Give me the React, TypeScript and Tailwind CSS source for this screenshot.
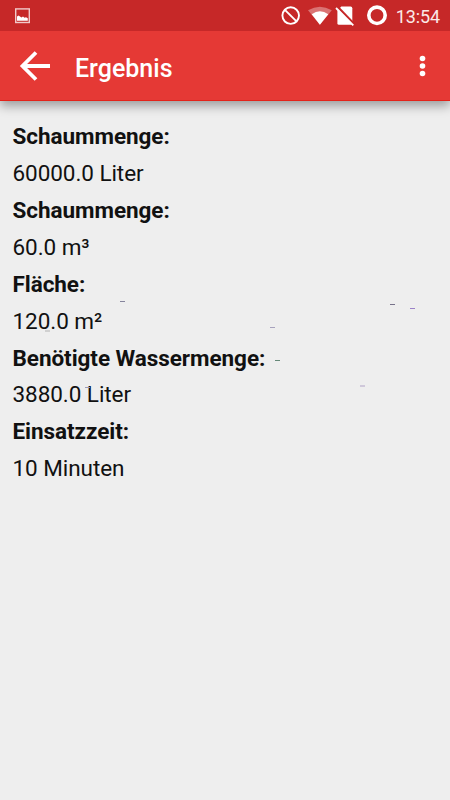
type Result = {
  label: string
  value: string
}

const results: Result[] = [
  { label: "Schaummenge:", value: "60000.0 Liter" },
  { label: "Schaummenge:", value: "60.0 m³" },
  { label: "Fläche:", value: "120.0 m²" },
  { label: "Benötigte Wassermenge:", value: "3880.0 Liter" },
  { label: "Einsatzzeit:", value: "10 Minuten" },
]

const StatusBar = () => (
  <div className="relative z-10 flex h-[31px] items-center justify-between bg-[#c62828] pl-[15px] pr-[10px] text-white">
    <svg width="16" height="16" viewBox="0 0 16 16">
      <rect x="0.7" y="0.9" width="13.6" height="13.6" fill="none" stroke="#fff" strokeOpacity="0.75" strokeWidth="1.4" />
      <path d="M2 12.8V8.6L3.5 7.4 5 8.4l1.5 1 1.5-.9 1.5 1.2 1.5-.5 1.8 1v2.6z" fill="#fff" />
    </svg>
    <div className="flex h-full items-center gap-[5px]">
      <svg width="112" height="31" viewBox="0 0 112 31">
        <g fill="none" stroke="#fff">
          <circle cx="11.7" cy="15.6" r="8.3" strokeWidth="1.9" />
          <path d="M5.9 9.8l11.6 11.6" strokeWidth="1.9" />
          <circle cx="98" cy="15.3" r="8.2" strokeWidth="3.6" />
        </g>
        <path d="M29 10.3Q40.9 3.3 52.8 10.3L40.9 24.8z" fill="#fff" fillOpacity="0.35" />
        <path d="M32.7 14.2Q40.9 8.4 49.3 14.2L40.9 24.8z" fill="#fff" />
        <path d="M62.3 6.6H71.6q1.7 0 1.7 1.7V23.2q0 1.6-1.6 1.6H60q-1.6 0-1.6-1.6V10.7z" fill="#fff" />
        <path d="M58.6 6.9L75.6 24.5" stroke="#c62828" strokeWidth="2.4" />
        <path d="M57 8l17.3 17.3" stroke="#fff" strokeWidth="1.8" />
      </svg>
      <span className="pt-[2px] text-[18px] leading-none tracking-[-0.1px] text-[#fbe9e7]">13:54</span>
    </div>
  </div>
)

const Toolbar = () => (
  <header className="flex h-[70px] items-center justify-between border-b border-[#e32219] bg-[#e53935] pl-[19px] pr-[24px] text-white shadow-[0_5px_10px_0px_rgba(0,0,0,0.34)]">
    <div className="flex items-center gap-[24px]">
      <button aria-label="Zurück">
        <svg width="32" height="32" viewBox="0 0 32 32" fill="none" stroke="#fff" strokeWidth="3.8">
          <path d="M31 16H4M17 2.5L3.5 16 17 29.5" />
        </svg>
      </button>
      <h1 className="pt-[5px] text-[25px] font-medium leading-none">Ergebnis</h1>
    </div>
    <button aria-label="Menü">
      <svg width="7" height="22" viewBox="0 0 7 22" fill="#fff">
        <circle cx="3.5" cy="3.5" r="2.8" />
        <circle cx="3.5" cy="11" r="2.8" />
        <circle cx="3.5" cy="18.5" r="2.8" />
      </svg>
    </button>
  </header>
)

// faint dashes scattered over the result area
const Specks = () => (
  <svg aria-hidden="true" className="pointer-events-none absolute inset-0" width="450" height="800" shapeRendering="crispEdges">
    <rect x="120" y="301" width="5" height="1" fill="#85849c" />
    <rect x="270" y="327" width="5" height="1" fill="#a7a2bd" />
    <rect x="45" y="330" width="5" height="2" fill="#d0d0d0" />
    <rect x="390" y="304" width="5" height="1" fill="#77728a" />
    <rect x="410" y="308" width="5" height="1" fill="#9b82c8" />
    <rect x="275" y="360" width="5" height="1" fill="#668878" />
    <rect x="360" y="385" width="5" height="2" fill="#cfc8da" />
    <rect x="85" y="387" width="5" height="1" fill="#9999b8" />
  </svg>
)

const App = () => {
  return (
    <div className="relative min-h-screen bg-[#eeeeee] font-['Roboto',sans-serif]">
      <StatusBar />
      <Toolbar />
      <main className="px-[12.5px] pt-[17.3px] text-[22.5px] leading-[36.87px] tracking-[-0.06px] text-[#111111]">
        <dl>
          {results.map((result, index) => (
            <div key={index}>
              <dt className="font-bold">{result.label}</dt>
              <dd>{result.value}</dd>
            </div>
          ))}
        </dl>
      </main>
      <Specks />
    </div>
  )
}

export default App
